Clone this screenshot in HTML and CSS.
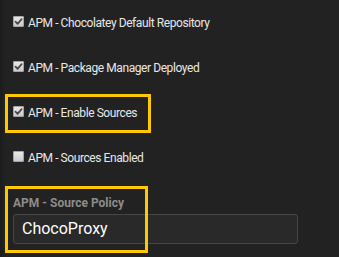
FILE: index.html
```html
<!DOCTYPE html>
<html>
<head>
    <title>APM Settings</title>
    <link rel="stylesheet" href="styles.css">
</head>
<body>
    <div class="panel">
        <div class="check-row">
            <span class="check is-checked">
                <svg viewBox="0 0 11 11" width="11" height="11"><path d="M2.5 5.6 L4.6 7.8 L8.6 3.2" fill="none" stroke="#4a4a4a" stroke-width="1.8" stroke-linecap="round" stroke-linejoin="round"/></svg>
            </span>
            <span class="check-label">APM - Chocolatey Default Repository</span>
        </div>
        <div class="check-row">
            <span class="check is-checked">
                <svg viewBox="0 0 11 11" width="11" height="11"><path d="M2.5 5.6 L4.6 7.8 L8.6 3.2" fill="none" stroke="#4a4a4a" stroke-width="1.8" stroke-linecap="round" stroke-linejoin="round"/></svg>
            </span>
            <span class="check-label">APM - Package Manager Deployed</span>
        </div>
        <div class="check-row">
            <span class="check is-checked">
                <svg viewBox="0 0 11 11" width="11" height="11"><path d="M2.5 5.6 L4.6 7.8 L8.6 3.2" fill="none" stroke="#4a4a4a" stroke-width="1.8" stroke-linecap="round" stroke-linejoin="round"/></svg>
            </span>
            <span class="check-label">APM - Enable Sources</span>
            <div class="highlight hl-enable"></div>
        </div>
        <div class="check-row">
            <span class="check"></span>
            <span class="check-label">APM - Sources Enabled</span>
        </div>

        <div class="field">
            <label class="field-label">APM - Source Policy</label>
            <div class="field-input">ChocoProxy</div>
            <div class="highlight hl-policy"></div>
        </div>
    </div>
</body>
</html>
```

FILE: styles.css
```css
html, body {
    margin: 0;
    height: 100%;
    background-color: #222222;
    overflow: hidden;
}
body {
    font-family: Roboto, "Liberation Sans", Arial, sans-serif;
    color: #e8e8e8;
}
.panel {
    height: 100%;
    border-left: 3px solid #1d1d1d;
    padding-left: 10px;
    box-sizing: border-box;
}
.check-row {
    position: relative;
    display: flex;
    align-items: center;
    height: 45px;
}
.check {
    width: 11px;
    height: 11px;
    border-radius: 2px;
    background: linear-gradient(#ececec, #c8c8c8);
    box-shadow: inset 0 0 0 1px #a4a4a4;
    margin-right: 4px;
    margin-top: -2px;
    flex: none;
}
.check svg { display: block; }
.check-label {
    font-size: 12px;
    line-height: 14px;
    letter-spacing: -0.42px;
    padding-top: 1px;
}
.field {
    position: relative;
    padding-top: 16px;
}
.field-label {
    display: block;
    font-size: 12px;
    line-height: 14px;
    font-weight: bold;
    color: #8c8c8c;
}
.field-input {
    margin-top: 4px;
    width: 285px;
    height: 30px;
    box-sizing: border-box;
    border: 1px solid #464646;
    border-radius: 3px;
    background-color: #292929;
    padding-left: 8px;
    font-size: 16px;
    line-height: 28px;
    color: #ffffff;
}
/* yellow annotation frames */
.highlight {
    position: absolute;
    border: 3px solid #fdc800;
    box-sizing: border-box;
}
.hl-enable {
    left: -8px;
    top: 4px;
    width: 146px;
    height: 39px;
}
.hl-policy {
    left: -8px;
    top: 6px;
    width: 143px;
    height: 67px;
}
```
